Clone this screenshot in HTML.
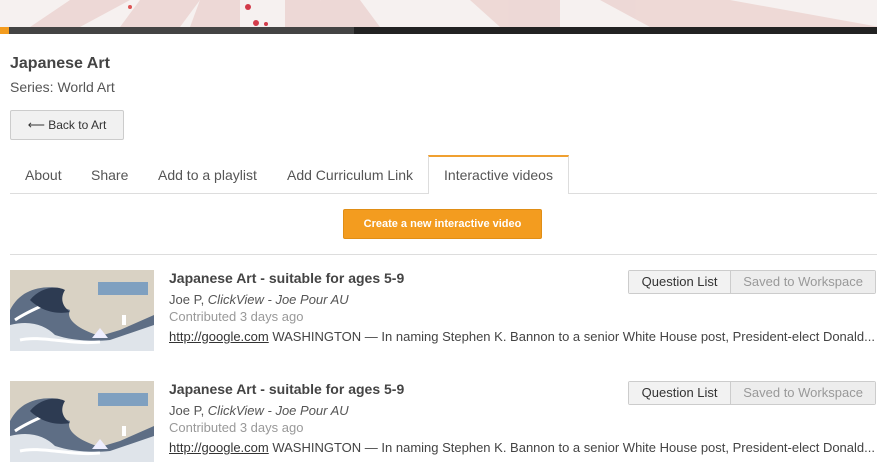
<!DOCTYPE html>
<html><head><style>
*{margin:0;padding:0;box-sizing:border-box}
body{width:877px;height:472px;overflow:hidden;background:#fff;font-family:"Liberation Sans",Arial,sans-serif;color:#333;position:relative}
.abs{position:absolute}
.hero{left:0;top:0;width:877px;height:27px;background:#f6f1f0;overflow:hidden}
.bar{top:27px;height:7px}
h1{position:absolute;left:10px;top:55px;font-size:16px;font-weight:bold;color:#444}
.series{left:10px;top:79px;font-size:14px;color:#555}
.back{left:10px;top:110px;width:114px;height:30px;border:1px solid #ccc;border-radius:2px;background:#f1f1f1;font-size:12px;line-height:28px;text-align:center;color:#333}
.tabline{left:10px;top:193px;width:867px;height:1px;background:#ddd}
.tab{top:167px;font-size:14px;color:#555}
.atab{left:428px;top:155px;width:141px;height:39px;border:1px solid #ddd;border-top:2px solid #f0a030;border-bottom:none;background:#fff;font-size:14px;color:#555;text-align:center;line-height:37px}
.cbtn{left:343px;top:209px;width:199px;height:30px;background:#f39c1f;border:1px solid #e08e16;border-radius:2px;color:#fff;font-size:11px;font-weight:bold;text-align:center;line-height:28px}
.div{left:10px;top:254px;width:867px;height:1px;background:#ddd}
.title{font-size:14px;font-weight:bold;color:#444}
.auth{font-size:13px;color:#555}
.contrib{font-size:13px;color:#999}
.desc{font-size:13px;color:#444;white-space:nowrap;width:708px;overflow:hidden}
.desc u{color:#333}
.btns{height:24px;display:flex;border:1px solid #ccc;border-radius:2px;font-size:13px;width:248px}
.btns div{line-height:22px;background:#f2f2f2;text-align:center;width:102px}
.btns div+div{border-left:1px solid #ccc;color:#999;background:#ededed;width:146px}
</style></head><body>
<div class="abs hero">
<svg width="877" height="27"><g fill="#ecd3d0" opacity=".8">
<polygon points="30,27 70,0 130,0 80,27"/><polygon points="120,27 140,0 200,0 180,27"/><polygon points="190,27 200,0 240,0 240,27"/>
<polygon points="285,27 285,0 320,0 335,27"/><polygon points="330,27 320,0 360,0 380,27"/><polygon points="470,0 560,0 560,27 500,27"/><polygon points="600,0 730,0 880,27 650,27"/></g>
<circle cx="248" cy="7" r="3" fill="#d23b4a"/><circle cx="256" cy="23" r="3" fill="#d23b4a"/><circle cx="266" cy="24" r="2" fill="#d23b4a"/><circle cx="130" cy="7" r="2" fill="#d55"/></svg>
</div>
<div class="abs bar" style="left:0;width:9px;background:#f39c1f"></div>
<div class="abs bar" style="left:9px;width:345px;background:#444"></div>
<div class="abs bar" style="left:354px;width:523px;background:#222"></div>
<h1>Japanese Art</h1>
<div class="abs series">Series: World Art</div>
<div class="abs back">⟵ Back to Art</div>
<div class="abs tabline"></div>
<div class="abs tab" style="left:25px">About</div>
<div class="abs tab" style="left:91px">Share</div>
<div class="abs tab" style="left:158px">Add to a playlist</div>
<div class="abs tab" style="left:287px">Add Curriculum Link</div>
<div class="abs atab">Interactive videos</div>
<div class="abs cbtn">Create a new interactive video</div>
<div class="abs div"></div>

<svg width="0" height="0" style="position:absolute"><defs><symbol id="wave" viewBox="0 0 144 81">
<rect width="144" height="81" fill="#d9d2c4"/>
<path d="M0,81 L0,40 C10,20 30,15 50,18 C40,25 45,35 60,40 C55,50 70,60 90,66 L110,60 L144,45 L144,81 Z" fill="#5e6e85"/>
<path d="M0,81 L0,55 C20,50 35,55 45,65 C60,70 80,72 100,70 L144,55 L144,81 Z" fill="#dfe4ea"/>
<path d="M5,50 C20,40 35,35 45,30 M10,70 C30,65 60,75 90,72" stroke="#fff" stroke-width="3" fill="none"/>
<path d="M20,30 C30,18 45,15 55,20 C50,28 52,36 60,42 C45,45 30,40 20,30Z" fill="#2d3b52"/>
<polygon points="82,68 90,58 98,68" fill="#eef"/>
<rect x="88" y="12" width="50" height="13" fill="#7fa0c0"/>
<rect x="112" y="45" width="4" height="10" fill="#fff"/>
</symbol></defs></svg>

<svg class="abs" style="left:10px;top:270px" width="144" height="81"><use href="#wave"/></svg>
<div class="abs title" style="left:169px;top:270px">Japanese Art - suitable for ages 5-9</div>
<div class="abs auth" style="left:169px;top:292px">Joe P, <i>ClickView - Joe Pour AU</i></div>
<div class="abs contrib" style="left:169px;top:309px">Contributed 3 days ago</div>
<div class="abs desc" style="left:169px;top:329px"><u>http://google.com</u> WASHINGTON — In naming Stephen K. Bannon to a senior White House post, President-elect Donald...</div>
<div class="abs btns" style="left:628px;top:270px"><div>Question List</div><div>Saved to Workspace</div></div>

<svg class="abs" style="left:10px;top:381px" width="144" height="81"><use href="#wave"/></svg>
<div class="abs title" style="left:169px;top:381px">Japanese Art - suitable for ages 5-9</div>
<div class="abs auth" style="left:169px;top:403px">Joe P, <i>ClickView - Joe Pour AU</i></div>
<div class="abs contrib" style="left:169px;top:420px">Contributed 3 days ago</div>
<div class="abs desc" style="left:169px;top:440px"><u>http://google.com</u> WASHINGTON — In naming Stephen K. Bannon to a senior White House post, President-elect Donald...</div>
<div class="abs btns" style="left:628px;top:381px"><div>Question List</div><div>Saved to Workspace</div></div>
</body></html>
